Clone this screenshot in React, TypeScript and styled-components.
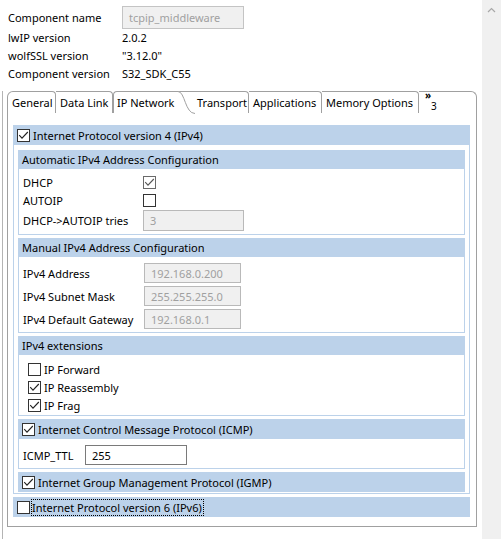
import styled, { createGlobalStyle } from "styled-components";

const GlobalStyle = createGlobalStyle`
  html, body {
    margin: 0;
    padding: 0;
    background: #fff;
  }
  body {
    font-family: "Noto Sans", "Segoe UI", sans-serif;
    font-size: 11px;
    color: #000;
  }
  * { box-sizing: border-box; }
`;

const BLUE = "#bcd2ea";
const LINE = "#a0a0a0";

type CheckProps = { checked?: boolean; disabled?: boolean };

const Check = ({ checked, disabled }: CheckProps) => (
  <CheckBox $disabled={disabled}>
    {checked && (
      <svg width="11" height="11" viewBox="0 0 11 11">
        <path
          d="M1.2 5.2 L4 8.2 L9.8 2"
          fill="none"
          stroke={disabled ? "#555" : "#222"}
          strokeWidth="1.1"
        />
      </svg>
    )}
  </CheckBox>
);

const tabs = [
  { label: "General", width: 49 },
  { label: "Data Link", width: 57 },
  { label: "IP Network", width: 80, selected: true },
  { label: "Transport", width: 56 },
  { label: "Applications", width: 73 },
  { label: "Memory Options", width: 97 },
];

const App = () => {
  return (
    <>
      <GlobalStyle />
      <Page>
        <Main>
          <InfoGrid>
            <InfoLabel>Component name</InfoLabel>
            <InfoValue>
              <NameBox>tcpip_middleware</NameBox>
            </InfoValue>
            <InfoLabel>lwIP version</InfoLabel>
            <InfoValue>2.0.2</InfoValue>
            <InfoLabel>wolfSSL version</InfoLabel>
            <InfoValue>"3.12.0"</InfoValue>
            <InfoLabel>Component version</InfoLabel>
            <InfoValue>S32_SDK_C55</InfoValue>
          </InfoGrid>

          <TabArea>
            <TabStrip>
              {tabs.map((t, i) => (
                <Tab key={t.label} $width={t.width} $selected={t.selected} $first={i === 0}>
                  {t.label}
                  {t.selected && (
                    <Curve width="17" height="23" viewBox="0 0 17 23">
                      <path d="M0 0.5 C 7 0.5, 7 22.5, 17 22.5" fill="#fff" stroke={LINE} strokeWidth="1" />
                    </Curve>
                  )}
                </Tab>
              ))}
              <MoreTab>
                <Chevrons>»</Chevrons>
                <MoreCount>3</MoreCount>
              </MoreTab>
            </TabStrip>

            <Frame>
              <Section>
                <Header $height={20} $pad={4}>
                  <Check checked />
                  <span>Internet Protocol version 4 (IPv4)</span>
                </Header>
                <OuterBody>
                  <Group>
                    <Header $height={19} $pad={4}>Automatic IPv4 Address Configuration</Header>
                    <GroupBody $top={4} $bottom={3}>
                      <FormRow $label={120} $height={18}>
                        <span>DHCP</span>
                        <Check checked disabled />
                      </FormRow>
                      <FormRow $label={120} $height={18}>
                        <span>AUTOIP</span>
                        <Check />
                      </FormRow>
                      <FormRow $label={120} $height={22}>
                        <span>DHCP-&gt;AUTOIP tries</span>
                        <TextBox $width={101} $height={21}>3</TextBox>
                      </FormRow>
                    </GroupBody>
                  </Group>

                  <Group>
                    <Header $height={19} $pad={4}>Manual IPv4 Address Configuration</Header>
                    <GroupBody $top={6} $bottom={3} $gap={3}>
                      <FormRow $label={121} $height={20}>
                        <span>IPv4 Address</span>
                        <TextBox $width={97} $height={20}>192.168.0.200</TextBox>
                      </FormRow>
                      <FormRow $label={121} $height={20}>
                        <span>IPv4 Subnet Mask</span>
                        <TextBox $width={97} $height={20}>255.255.255.0</TextBox>
                      </FormRow>
                      <FormRow $label={121} $height={20}>
                        <span>IPv4 Default Gateway</span>
                        <TextBox $width={97} $height={20}>192.168.0.1</TextBox>
                      </FormRow>
                    </GroupBody>
                  </Group>

                  <Group>
                    <Header $height={19} $pad={4}>IPv4 extensions</Header>
                    <GroupBody $top={5} $bottom={1} $left={9}>
                      <CheckRow>
                        <Check />
                        <span>IP Forward</span>
                      </CheckRow>
                      <CheckRow>
                        <Check checked />
                        <span>IP Reassembly</span>
                      </CheckRow>
                      <CheckRow>
                        <Check checked />
                        <span>IP Frag</span>
                      </CheckRow>
                    </GroupBody>
                  </Group>

                  <Group>
                    <Header $height={20} $pad={4}>
                      <Check checked />
                      <span>Internet Control Message Protocol (ICMP)</span>
                    </Header>
                    <GroupBody $top={6} $bottom={3}>
                      <FormRow $label={62} $height={20}>
                        <span>ICMP_TTL</span>
                        <TextBox $width={102} $height={20} $enabled>255</TextBox>
                      </FormRow>
                    </GroupBody>
                  </Group>

                  <Group>
                    <Header $height={20} $pad={4}>
                      <Check checked />
                      <span>Internet Group Management Protocol (IGMP)</span>
                    </Header>
                  </Group>
                </OuterBody>
              </Section>

              <Section>
                <Header $height={20} $pad={4}>
                  <Check />
                  <Focused>Internet Protocol version 6 (IPv6)</Focused>
                </Header>
              </Section>
            </Frame>
          </TabArea>
        </Main>

        <ScrollBar>
          <svg width="9" height="6" viewBox="0 0 9 6">
            <path d="M1 5 L4.5 1.5 L8 5" fill="none" stroke="#a8a8a8" strokeWidth="1.2" />
          </svg>
        </ScrollBar>
      </Page>
    </>
  );
};

export default App;

const Page = styled.div`
  display: flex;
  width: 501px;
  height: 539px;
  overflow: hidden;
`;

const Main = styled.div`
  width: 482px;
  display: flex;
  flex-direction: column;
`;

const ScrollBar = styled.div`
  width: 19px;
  background: #f0f0f0;
  display: flex;
  justify-content: center;
  padding-top: 7px;
  svg {
    display: block;
  }
`;

const InfoGrid = styled.div`
  display: grid;
  grid-template-columns: 114px 1fr;
  grid-template-rows: 24px 17px 18px 18px;
  padding: 5px 0 0 8px;
  align-items: center;
`;

const InfoLabel = styled.div`
  white-space: nowrap;
`;

const InfoValue = styled.div`
  white-space: nowrap;
`;

const NameBox = styled.div`
  width: 122px;
  height: 23px;
  border: 1px solid #c4c4c4;
  background: #f0f0f0;
  color: #a0a0a0;
  padding-left: 6px;
  display: flex;
  align-items: center;
`;

const TabArea = styled.div`
  flex: 1;
  margin: 9px 0 0 2px;
  border-left: 1px solid #b4b4b4;
  padding-left: 4px;
`;

const TabStrip = styled.div`
  display: flex;
  width: 470px;
  height: 22px;
`;

const Tab = styled.div<{ $width: number; $selected?: boolean; $first?: boolean }>`
  position: relative;
  width: ${(p) => p.$width}px;
  flex-shrink: 0;
  display: flex;
  align-items: center;
  padding-left: ${(p) => (p.$selected ? 3 : 4)}px;
  white-space: nowrap;
  border-top: 1px solid ${LINE};
  border-right: ${(p) => (p.$selected ? "none" : `1px solid ${LINE}`)};
  border-left: ${(p) => (p.$first ? `1px solid ${LINE}` : "none")};
  border-top-left-radius: ${(p) => (p.$first ? 6 : 0)}px;
  border-top-right-radius: ${(p) => (p.$selected ? 0 : 4)}px;
  ${(p) =>
    p.$selected &&
    `
    border-left: 1px solid ${LINE};
    border-top-left-radius: 4px;
  `}
`;

const Curve = styled.svg`
  position: absolute;
  right: -2px;
  top: -1px;
`;

const MoreTab = styled.div`
  flex: 1;
  position: relative;
  border-top: 1px solid ${LINE};
  border-right: 1px solid ${LINE};
  border-top-right-radius: 6px;
`;

const Chevrons = styled.span`
  position: absolute;
  left: 6px;
  top: -1px;
  font-size: 10px;
  font-weight: bold;
  line-height: 9px;
`;

const MoreCount = styled.span`
  position: absolute;
  left: 12px;
  top: 9px;
  font-size: 10px;
  line-height: 10px;
`;

const Frame = styled.div`
  width: 470px;
  display: flex;
  flex-direction: column;
  gap: 3px;
  border: 1px solid ${LINE};
  border-top: none;
  padding: 12px 6px 9px 5px;
`;

const Section = styled.div`
  display: flex;
  flex-direction: column;
`;

const Header = styled.div<{ $height: number; $pad: number }>`
  height: ${(p) => p.$height}px;
  background: ${BLUE};
  display: flex;
  align-items: center;
  gap: 3px;
  padding-left: ${(p) => p.$pad}px;
  white-space: nowrap;
`;

const OuterBody = styled.div`
  border: 1px solid ${BLUE};
  border-top: none;
  padding: 5px 4px 1px 4px;
  display: flex;
  flex-direction: column;
  gap: 3px;
`;

const Group = styled.div`
  display: flex;
  flex-direction: column;
`;

const GroupBody = styled.div<{ $top: number; $bottom: number; $left?: number; $gap?: number }>`
  border: 1px solid ${BLUE};
  border-top: none;
  padding: ${(p) => p.$top}px 4px ${(p) => p.$bottom}px ${(p) => p.$left ?? 4}px;
  display: flex;
  flex-direction: column;
  gap: ${(p) => p.$gap ?? 0}px;
`;

const FormRow = styled.div<{ $label: number; $height: number }>`
  display: grid;
  grid-template-columns: ${(p) => p.$label}px auto;
  align-items: center;
  height: ${(p) => p.$height}px;
  white-space: nowrap;
`;

const TextBox = styled.div<{ $width: number; $height: number; $enabled?: boolean }>`
  width: ${(p) => p.$width}px;
  height: ${(p) => p.$height}px;
  border: 1px solid ${(p) => (p.$enabled ? "#7a7a7a" : "#b9b9b9")};
  background: ${(p) => (p.$enabled ? "#fff" : "#f0f0f0")};
  color: ${(p) => (p.$enabled ? "#000" : "#a0a0a0")};
  padding-left: 6px;
  display: flex;
  align-items: center;
`;

const CheckRow = styled.div`
  height: 18px;
  display: flex;
  align-items: center;
  gap: 3px;
  white-space: nowrap;
`;

const CheckBox = styled.span<{ $disabled?: boolean }>`
  width: 13px;
  height: 13px;
  flex-shrink: 0;
  border: 1px solid ${(p) => (p.$disabled ? "#6a6a6a" : "#333")};
  background: #fff;
  display: inline-flex;
  svg {
    display: block;
  }
`;

const Focused = styled.span`
  outline: 1px dotted #000;
  outline-offset: 0;
  padding: 0 1px 0 0;
  margin-left: -1px;
  line-height: 15px;
`;
